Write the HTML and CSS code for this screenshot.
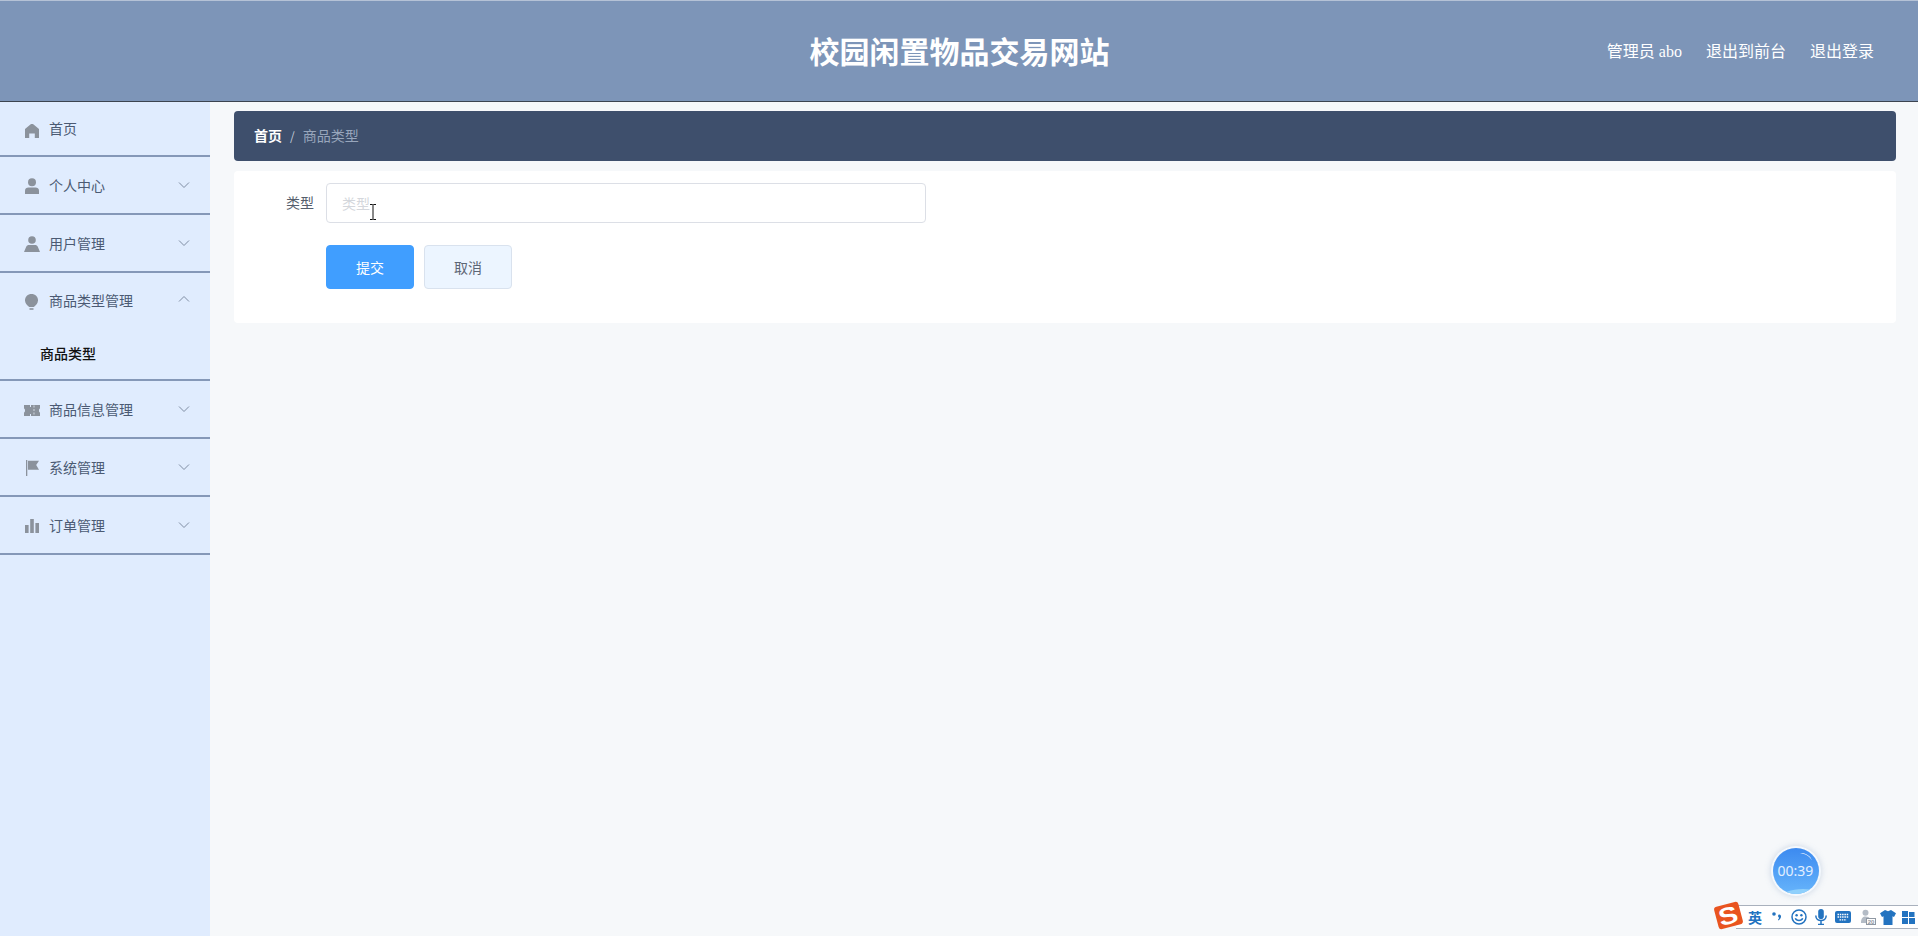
FILE: index.html
```html
<!DOCTYPE html>
<html lang="zh-CN">
<head>
<meta charset="utf-8">
<title>校园闲置物品交易网站</title>
<link rel="stylesheet" href="styles.css">
</head>
<body>
<header class="topbar">
  <div></div>
  <h1 class="site-title">校园闲置物品交易网站</h1>
  <nav class="top-actions">
    <span>管理员 abo</span>
    <a>退出到前台</a>
    <a>退出登录</a>
  </nav>
</header>
<div class="layout">
  <aside class="sidebar">
    <div class="menu-item menu-first">
      <svg class="menu-icon" viewBox="0 0 16 16"><path d="M8 2C9 2 9.600 2.500 10.500 3.200L15 7V16H10.800V11.500H5.200V16H1V7L5.500 3.200C6.400 2.500 7 2 8 2Z"/></svg>
      <span class="menu-label">首页</span>
    </div>
    <div class="menu-item">
      <svg class="menu-icon" viewBox="0 0 16 16"><circle cx="8" cy="4.200" r="4"/><path d="M1 16V12.800C1 10.400 2.600 9.400 4.500 9.400H11.500C13.400 9.400 15 10.400 15 12.800V16Z"/></svg>
      <span class="menu-label">个人中心</span>
      <svg class="arrow" viewBox="0 0 12 8"><path d="M1 1.500 6 6.500 11 1.500"/></svg>
    </div>
    <div class="menu-item">
      <svg class="menu-icon" viewBox="0 0 16 16"><circle cx="8" cy="4" r="3.800"/><path d="M0 16 2.200 10.800C2.700 9.600 3.700 9 5 9H11C12.300 9 13.300 9.600 13.800 10.800L16 16Z"/></svg>
      <span class="menu-label">用户管理</span>
      <svg class="arrow" viewBox="0 0 12 8"><path d="M1 1.500 6 6.500 11 1.500"/></svg>
    </div>
    <div class="menu-item menu-open">
      <svg class="menu-icon" viewBox="0 0 16 16"><path d="M7.500 0C3.800 0 1 2.700 1 6.300 1 9 2.800 11.300 5.200 13H9.800C12.200 11.300 14 9 14 6.300 14 2.700 11.200 0 7.500 0Z"/><path d="M5.500 14.200H9.500V15.800H5.500Z"/></svg>
      <span class="menu-label">商品类型管理</span>
      <svg class="arrow" viewBox="0 0 12 8"><path d="M1 6.500 6 1.500 11 6.500"/></svg>
      <div class="submenu">商品类型</div>
    </div>
    <div class="menu-item">
      <svg class="menu-icon" viewBox="0 0 16 16"><path d="M0 3H6V5H7V3H16V6.500C15.200 6.800 15 7.500 15 8.500S15.200 10.200 16 10.500V14H7V12H6V14H0V10.500C.8 10.200 1 9.500 1 8.500S.8 6.800 0 6.500Z"/><path class="ticket-cut" d="M10 3.500V14" /></svg>
      <span class="menu-label">商品信息管理</span>
      <svg class="arrow" viewBox="0 0 12 8"><path d="M1 1.500 6 6.500 11 1.500"/></svg>
    </div>
    <div class="menu-item">
      <svg class="menu-icon" viewBox="0 0 16 16"><path d="M2 0H3.300V16H2Z"/><path d="M4 .8H15L12.200 5 15 9.800H4Z"/></svg>
      <span class="menu-label">系统管理</span>
      <svg class="arrow" viewBox="0 0 12 8"><path d="M1 1.500 6 6.500 11 1.500"/></svg>
    </div>
    <div class="menu-item">
      <svg class="menu-icon" viewBox="0 0 16 16"><path d="M1 7H4.600V15H1ZM6.200 1H9.800V15H6.200ZM11.400 5H15V15H11.400Z"/></svg>
      <span class="menu-label">订单管理</span>
      <svg class="arrow" viewBox="0 0 12 8"><path d="M1 1.500 6 6.500 11 1.500"/></svg>
    </div>
  </aside>
  <main class="content">
    <div class="crumb">
      <b class="crumb-home">首页</b>
      <span class="crumb-sep">/</span>
      <span class="crumb-current">商品类型</span>
    </div>
    <form class="panel">
      <div class="form-row">
        <label class="form-label">类型</label>
        <input class="form-input" type="text" placeholder="类型">
        <svg class="ibeam" viewBox="0 0 8 16"><path d="M1 .5H3.500L4 1 4.500 .5H7M4 1V15M1 15.500H3.500L4 15 4.500 15.500H7"/></svg>
      </div>
      <div class="form-buttons">
        <button class="btn btn-primary" type="button">提交</button>
        <button class="btn btn-plain" type="button">取消</button>
      </div>
    </form>
  </main>
</div>
<div class="timer"><span class="timer-text">00:39</span></div>
<div class="ime">
  <div class="ime-logo"><span>S</span></div>
  <span class="ime-lang">英</span>
  <svg class="ime-icon ime-dots" viewBox="0 0 10 12"><circle cx="2" cy="3" r="1.800"/><path d="M7.500 3.500C9.800 4 9.500 7.500 6.500 9.500L6 8.600C7 7.800 7.200 7 6.800 6.500 5.500 5.500 6 3.300 7.500 3.500Z"/></svg>
  <svg class="ime-icon ime-smile" viewBox="0 0 16 16"><circle class="ime-line" cx="8" cy="8" r="7"/><circle cx="5.600" cy="6.200" r="1.200"/><circle cx="10.400" cy="6.200" r="1.200"/><path class="ime-line" d="M4.300 9.300C5.500 12.300 10.500 12.300 11.700 9.300"/></svg>
  <svg class="ime-icon ime-mic" viewBox="0 0 12 16"><rect x="3.200" y="0" width="5.600" height="10" rx="2.800"/><path class="ime-line" d="M.8 6.500C.8 13.300 11.200 13.300 11.200 6.500M6 11.500V15.500M3 15.400H9"/></svg>
  <svg class="ime-icon ime-keys" viewBox="0 0 16 12"><rect x="0" y="0" width="16" height="12" rx="2"/><path class="ime-key" d="M2.500 3.500H13.500M2.500 6H13.500M4.500 8.800H11.500"/></svg>
  <svg class="ime-icon ime-skin" viewBox="0 0 16 16"><circle class="ime-gray" cx="5.500" cy="3.800" r="3"/><path class="ime-gray" d="M1 14C1 9 3 7.500 5.500 7.500S9 8.500 9.500 9H6V14Z"/><rect class="ime-badge" x="6.500" y="9.500" width="9" height="6"/><text class="ime-badge-text" x="11" y="14.500">20</text></svg>
  <svg class="ime-icon ime-shirt" viewBox="0 0 16 15"><path d="M5 0 8 1.200 11 0 16 3.200 14 7 12.500 6.300V15H3.500V6.300L2 7 0 3.200Z"/></svg>
  <svg class="ime-icon ime-grid" viewBox="0 0 13 13"><path d="M0 0H6V6H0ZM7 1H12.500V6H7ZM0 7H6V13H0ZM7 7H13V13H7Z"/></svg>
</div>
</body>
</html>
```
FILE: styles.css
```css
* { box-sizing: border-box; }
html, body { margin: 0; height: 936px; overflow: hidden; }
body {
  background: #f6f8fa;
  color: #4b5a73;
  font-family: "Liberation Serif", "Noto Sans CJK SC", serif;
  font-size: 14px;
}
.topbar {
  height: 102px;
  display: grid;
  grid-template-columns: 1fr auto 1fr;
  align-items: center;
  padding-bottom: 2px;
  background: #7d95b8;
  border-top: 1px solid #b5c2d6;
  border-bottom: 1px solid #3c4450;
}
.site-title {
  margin: 0;
  padding-left: 1px;
  color: #fff;
  font-family: "Noto Sans CJK SC", sans-serif;
  font-size: 30px;
  font-weight: 700;
  line-height: 1;
}
.top-actions {
  display: flex;
  justify-content: flex-end;
  gap: 24px;
  padding-right: 44px;
  color: #fff;
  font-size: 16px;
}
.layout { display: flex; height: 834px; }
.sidebar { width: 210px; flex: none; background: #e0ecfe; }
.menu-item {
  display: flex;
  flex-wrap: wrap;
  align-items: center;
  height: 58px;
  padding: 0 20px 0 24px;
  border-bottom: 2px solid #8598b8;
  font-family: "Noto Sans CJK SC", sans-serif;
}
.menu-first { height: 55px; }
.menu-first > .menu-label { margin-bottom: 2px; }
.menu-open { height: 108px; align-content: flex-start; }
.menu-open > .menu-icon { align-self: flex-start; margin-top: 21px; }
.menu-open > .menu-label { align-self: flex-start; margin-top: 17px; }
.menu-open > .arrow { align-self: flex-start; margin-top: 22px; }
.menu-icon { width: 16px; height: 16px; margin: 2px 9px 0 0; fill: #8b929c; flex: none; }
.ticket-cut { fill: none; stroke: #c5ccd6; stroke-width: 1.200; stroke-dasharray: 2 1.500; }
.menu-label { flex: 1; line-height: 20px; }
.arrow { width: 12px; height: 8px; fill: none; stroke: #7f8da3; stroke-width: 1; margin-top: -1px; flex: none; }
.submenu {
  flex: 0 0 100%;
  margin: 33px 0 0 16px;
  color: #111;
  font-weight: 500;
  line-height: 20px;
}
.content { flex: 1; padding: 9px 22px 0 24px; }
.crumb {
  display: flex;
  align-items: center;
  height: 50px;
  padding: 0 20px 2px;
  background: #3e4f6c;
  border-radius: 4px;
  font-family: "Noto Sans CJK SC", sans-serif;
}
.crumb-home { color: #fff; font-weight: 700; }
.crumb-sep { margin: 0 8px; color: #c3ccd9; font-size: 12px; }
.crumb-current { color: #98a6bc; }
.panel {
  margin-top: 10px;
  padding: 12px 0 34px;
  background: #fff;
  border-radius: 4px;
}
.form-row { position: relative; display: flex; align-items: center; height: 40px; }
.form-label {
  width: 92px;
  padding: 0 12px 2px 0;
  text-align: right;
  color: #555e6c;
  font-family: "Noto Sans CJK SC", sans-serif;
}
.form-input {
  width: 600px;
  height: 40px;
  padding: 0 15px;
  border: 1px solid #dcdfe6;
  border-radius: 4px;
  outline: none;
  color: #606266;
  font: 14px "Noto Sans CJK SC", sans-serif;
}
.form-input::placeholder { color: #d4d7dc; }
.ibeam {
  position: absolute;
  left: 135px;
  top: 21px;
  width: 8px;
  height: 16px;
  fill: none;
  stroke: #111;
  stroke-width: 1;
}
.form-buttons { display: flex; gap: 10px; margin: 22px 0 0 92px; }
.btn {
  width: 88px;
  height: 44px;
  padding: 0;
  border-radius: 4px;
  font: 14px "Noto Sans CJK SC", sans-serif;
}
.btn-primary { background: #409eff; border: 1px solid #409eff; color: #fff; }
.btn-plain { background: #ecf5ff; border: 1px solid #d9e2ee; color: #5d6675; }
.timer {
  position: absolute;
  left: 1773px;
  top: 848px;
  width: 46px;
  height: 46px;
  overflow: hidden;
  border-radius: 50%;
  background: linear-gradient(180deg, #3c8af0 0%, #66b4fb 100%);
  box-shadow: 0 0 0 2px #f4f8fd, 0 0 6px 2px rgba(120, 150, 190, .35);
  color: #e2efff;
  font-family: "Noto Sans", sans-serif;
  font-size: 14px;
  line-height: 46px;
  text-align: center;
}
.timer-text { position: relative; z-index: 1; margin-left: -1px; }
.timer::before {
  content: "";
  position: absolute;
  left: 26px;
  top: 6px;
  width: 13px;
  height: 6px;
  border-top: 1px solid rgba(255, 255, 255, .75);
  border-radius: 50%;
  transform: rotate(30deg);
}
.timer::after {
  content: "";
  position: absolute;
  left: 8px;
  bottom: -12px;
  width: 44px;
  height: 17px;
  border-radius: 50%;
  background: #8fd0fc;
}
.ime {
  position: absolute;
  left: 1736px;
  top: 905px;
  width: 182px;
  height: 24px;
  display: flex;
  align-items: center;
  padding-left: 12px;
  background: #fff;
  border-top: 1px solid #a9b1bd;
  border-bottom: 1px solid #a9b1bd;
}
.ime-logo {
  position: absolute;
  left: -20px;
  top: -2px;
  width: 25px;
  height: 23px;
  display: flex;
  align-items: center;
  justify-content: center;
  background: #e9541f;
  border-radius: 3px;
  transform: rotate(-15deg);
}
.ime-logo span {
  color: #fff;
  font: 700 24px/1 "Liberation Sans", sans-serif;
  transform: scaleX(1.200);
}
.ime-lang {
  width: 14px;
  color: #2373c0;
  font: 700 14px/1 "Noto Sans CJK SC", sans-serif;
}
.ime-icon { flex: none; fill: #2373c0; }
.ime-line { fill: none; stroke: #2373c0; stroke-width: 1.500; }
.ime-key { fill: none; stroke: #fff; stroke-width: 1.300; stroke-dasharray: 1.500 .8; }
.ime-gray { fill: #b4bcc6; }
.ime-badge { fill: #fff; stroke: #8f98a3; }
.ime-badge-text { fill: #8f98a3; font: 700 6px "Liberation Sans", sans-serif; text-anchor: middle; }
.ime-dots { width: 10px; height: 12px; margin-left: 10px; }
.ime-smile { width: 16px; height: 16px; margin-left: 9px; }
.ime-mic { width: 12px; height: 16px; margin-left: 8px; }
.ime-keys { width: 16px; height: 12px; margin-left: 8px; }
.ime-skin { width: 16px; height: 16px; margin-left: 9px; }
.ime-shirt { width: 16px; height: 15px; margin-left: 4px; }
.ime-grid { width: 13px; height: 13px; margin-left: 6px; }
```
